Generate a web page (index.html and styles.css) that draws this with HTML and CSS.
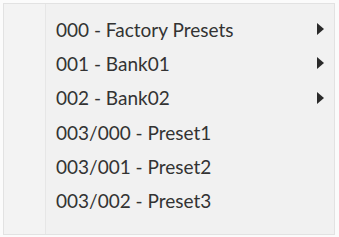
FILE: index.html
```html
<!DOCTYPE html>
<html>
<head>
<meta charset="utf-8">
<link rel="stylesheet" href="styles.css">
</head>
<body>
<div class="menu">
  <div class="gutter"></div>
  <ul class="items">
    <li class="item"><span class="label">000 - Factory Presets</span><span class="arrow"></span></li>
    <li class="item"><span class="label">001 - Bank01</span><span class="arrow"></span></li>
    <li class="item"><span class="label">002 - Bank02</span><span class="arrow"></span></li>
    <li class="item"><span class="label">003/000 - Preset1</span></li>
    <li class="item"><span class="label">003/001 - Preset2</span></li>
    <li class="item"><span class="label">003/002 - Preset3</span></li>
  </ul>
</div>
</body>
</html>
```
FILE: styles.css
```css
html, body {
  margin: 0;
  padding: 0;
  background: #fbfbfb;
}
body {
  width: 339px;
  height: 237px;
  overflow: hidden;
  font-family: Lato, "Open Sans", sans-serif;
}
.menu {
  box-sizing: border-box;
  margin: 3px 4px 0 3px;
  height: 232px;
  background: #f1f1f1;
  border: 1px solid #e2e2e2;
  display: flex;
}
.gutter {
  width: 41px;
  border-right: 1px solid #e6e6e6;
  background: #f3f3f3;
}
.items {
  list-style: none;
  margin: 0;
  padding: 8px 0 0 10px;
  flex: 1;
}
.item {
  height: 34.3px;
  display: flex;
  align-items: center;
  justify-content: space-between;
  padding-right: 10px;
}
.label {
  font-size: 19px;
  color: #333;
}
.arrow {
  width: 0;
  height: 0;
  border-top: 6px solid transparent;
  border-bottom: 6px solid transparent;
  border-left: 7px solid #2a2a2a;
}
```
